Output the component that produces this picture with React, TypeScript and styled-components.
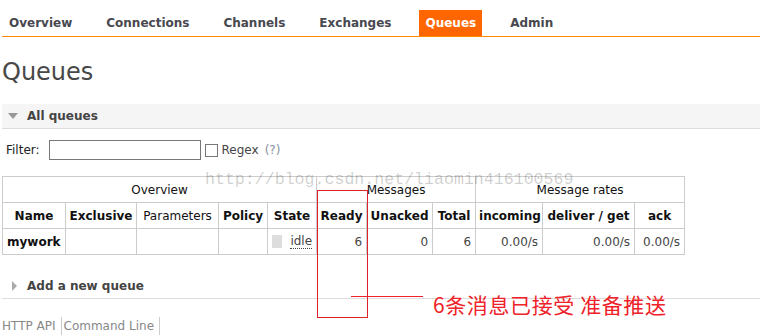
import React from "react";
import styled, { createGlobalStyle } from "styled-components";

const GlobalStyle = createGlobalStyle`
  html, body { margin: 0; padding: 0; background: #fff; }
  body { font-family: "DejaVu Sans", Verdana, sans-serif; font-size: 12px; color: #444; }
  * { box-sizing: border-box; }
`;

const Page = styled.div`
  position: relative;
  width: 760px;
  height: 336px;
  overflow: hidden;
`;

const Nav = styled.nav`
  margin-left: 2px;
  padding-top: 10px;
  border-bottom: 1px solid #ff8800;
`;

const NavList = styled.ul`
  display: flex;
  gap: 22px;
  list-style: none;
  margin: 0;
  padding: 0 0 0 1px;
`;

const NavItem = styled.li<{ $active?: boolean }>`
  height: 26px;
  line-height: 26px;
  padding: 0 6px;
  font-weight: bold;
  font-size: 12px;
  color: ${(p) => (p.$active ? "#fff" : "#484850")};
  background: ${(p) => (p.$active ? "#ff6600" : "transparent")};
`;

const Title = styled.h1`
  margin: 21px 0 0 2px;
  font-size: 24px;
  line-height: 28px;
  font-weight: normal;
  color: #484848;
`;

const Section = styled.div<{ $shaded?: boolean }>`
  display: flex;
  align-items: center;
  height: 25px;
  margin-left: 2px;
  background: ${(p) => (p.$shaded ? "#f5f5f5" : "transparent")};
  border-bottom: 1px solid #ddd;
  font-weight: bold;
  color: #444;
`;

const TriangleDown = styled.span`
  width: 0;
  height: 0;
  margin: 0 9px 0 6px;
  border-left: 5px solid transparent;
  border-right: 5px solid transparent;
  border-top: 6px solid #999;
`;

const TriangleRight = styled.span`
  width: 0;
  height: 0;
  margin: 0 10px 0 10px;
  border-top: 5px solid transparent;
  border-bottom: 5px solid transparent;
  border-left: 5px solid #aaa;
`;

const FilterRow = styled.div`
  display: flex;
  align-items: center;
  margin: 11px 0 0 6px;
  height: 20px;
  color: #222;
`;

const FilterInput = styled.input`
  width: 152px;
  height: 20px;
  margin: 0 4px 0 9px;
  border: 1px solid #777;
  padding: 0 2px;
  font: inherit;
`;

const CheckBox = styled.span`
  display: inline-block;
  width: 13px;
  height: 13px;
  border: 1px solid #777;
  margin: 0 3px 0 0;
`;

const Regex = styled.span`
  color: #444;
  margin-left: 1px;
`;

const Help = styled.span`
  margin-left: 6px;
  color: #8890a0;
`;

const Table = styled.table`
  margin: 16px 0 0 2px;
  width: 682px;
  table-layout: fixed;
  border-collapse: collapse;
  color: #111;
`;

const Th = styled.th<{ $light?: boolean }>`
  height: 26px;
  padding: 0 3px;
  border: 1px solid #ccc;
  text-align: center;
  white-space: nowrap;
  font-weight: ${(p) => (p.$light ? "normal" : "bold")};
`;

const Td = styled.td<{ $align?: "left" | "right"; $bold?: boolean }>`
  height: 26px;
  padding: 0 4px;
  border: 1px solid #ccc;
  white-space: nowrap;
  text-align: ${(p) => p.$align ?? "left"};
  font-weight: ${(p) => (p.$bold ? "bold" : "normal")};
  color: ${(p) => (p.$bold ? "#111" : "#444")};
`;

const StateWrap = styled.span`
  display: flex;
  align-items: center;
  justify-content: space-between;
`;

const StateBox = styled.span`
  display: inline-block;
  width: 10px;
  height: 13px;
  background: #ddd;
`;

const Idle = styled.abbr`
  text-decoration: none;
  border-bottom: 1px dotted #444;
  line-height: 14px;
`;

const AddSection = styled(Section)`
  margin-top: 19px;
`;

const Footer = styled.div`
  display: flex;
  margin: 18px 0 0 2px;
  color: #888;
`;

const FooterLink = styled.span`
  height: 18px;
  line-height: 18px;
  padding-right: 5px;
  margin-right: 2px;
  border-right: 1px solid #ccc;
`;

const Watermark = styled.div`
  position: absolute;
  left: 205px;
  top: 170px;
  font-family: "Liberation Mono", "Courier New", monospace;
  font-size: 16.6px;
  line-height: 20px;
  color: rgba(0, 0, 0, 0.2);
  pointer-events: none;
  white-space: nowrap;
`;

const RedBox = styled.div`
  position: absolute;
  left: 317px;
  top: 190px;
  width: 51px;
  height: 128px;
  border: 1px solid #dd2228;
`;

const RedLine = styled.div`
  position: absolute;
  left: 351px;
  top: 296px;
  width: 72px;
  height: 1px;
  background: #ee2228;
`;

const Note = styled.div`
  position: absolute;
  left: 433px;
  top: 290px;
  font-family: "Noto Sans CJK SC", "Noto Sans", sans-serif;
  font-size: 21px;
  line-height: 28px;
  letter-spacing: 0.6px;
  color: #ee2228;
  white-space: nowrap;
`;

const navItems = ["Overview", "Connections", "Channels", "Exchanges", "Queues", "Admin"];
const widths = [63, 71, 82, 49, 49, 50, 66, 43, 67, 92, 50];

export default function App() {
  return (
    <Page>
      <GlobalStyle />
      <Nav>
        <NavList>
          {navItems.map((n) => (
            <NavItem key={n} $active={n === "Queues"}>
              {n}
            </NavItem>
          ))}
        </NavList>
      </Nav>
      <Title>Queues</Title>
      <Section $shaded style={{ marginTop: 18 }}>
        <TriangleDown />
        All queues
      </Section>
      <FilterRow>
        Filter:
        <FilterInput type="text" />
        <CheckBox />
        <Regex>Regex</Regex>
        <Help>(?)</Help>
      </FilterRow>
      <Table>
        <colgroup>
          {widths.map((w, i) => (
            <col key={i} style={{ width: w }} />
          ))}
        </colgroup>
        <thead>
          <tr>
            <Th $light colSpan={5}>Overview</Th>
            <Th $light colSpan={3}>Messages</Th>
            <Th $light colSpan={3}>Message rates</Th>
          </tr>
          <tr>
            <Th>Name</Th>
            <Th>Exclusive</Th>
            <Th $light>Parameters</Th>
            <Th>Policy</Th>
            <Th>State</Th>
            <Th>Ready</Th>
            <Th>Unacked</Th>
            <Th>Total</Th>
            <Th>incoming</Th>
            <Th>deliver / get</Th>
            <Th>ack</Th>
          </tr>
        </thead>
        <tbody>
          <tr>
            <Td $bold>mywork</Td>
            <Td />
            <Td />
            <Td />
            <Td>
              <StateWrap>
                <StateBox />
                <Idle>idle</Idle>
              </StateWrap>
            </Td>
            <Td $align="right">6</Td>
            <Td $align="right">0</Td>
            <Td $align="right">6</Td>
            <Td $align="right">0.00/s</Td>
            <Td $align="right">0.00/s</Td>
            <Td $align="right">0.00/s</Td>
          </tr>
        </tbody>
      </Table>
      <AddSection>
        <TriangleRight />
        Add a new queue
      </AddSection>
      <Footer>
        <FooterLink>HTTP API</FooterLink>
        <FooterLink>Command Line</FooterLink>
      </Footer>
      <Watermark>http://blog.csdn.net/liaomin416100569</Watermark>
      <RedBox />
      <RedLine />
      <Note>6条消息已接受 准备推送</Note>
    </Page>
  );
}
